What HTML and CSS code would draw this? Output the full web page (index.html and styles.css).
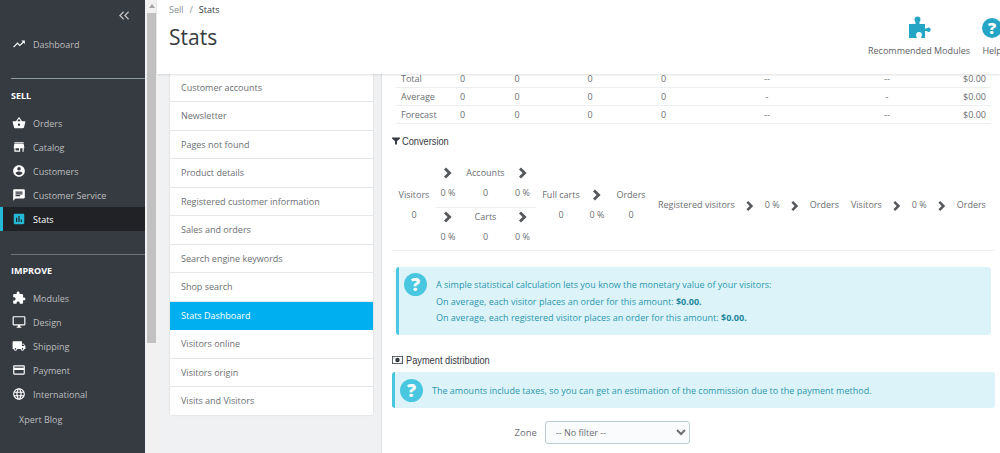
FILE: index.html
```html
<!DOCTYPE html>
<html lang="en">
<head>
  <meta charset="UTF-8" />
  <title>Stats</title>
  <link rel="stylesheet" href="styles.css">
</head>
<body>
  <svg class="sprite" xmlns="http://www.w3.org/2000/svg">
    <symbol id="i-trend" viewBox="0 0 24 24"><path d="M16 6l2.29 2.29-4.88 4.88-4-4L2 16.59 3.41 18l6-6 4 4 6.3-6.29L22 12V6z"/></symbol>
    <symbol id="i-basket" viewBox="0 0 24 24"><path d="M17.21 9l-4.38-6.56c-.19-.28-.51-.42-.83-.42-.32 0-.64.14-.83.43L6.79 9H2c-.55 0-1 .45-1 1 0 .09.01.18.04.27l2.54 9.27c.23.84 1 1.46 1.92 1.46h13c.92 0 1.69-.62 1.93-1.46l2.54-9.27L23 10c0-.55-.45-1-1-1h-4.79zM9 9l3-4.4L15 9H9zm3 8c-1.1 0-2-.9-2-2s.9-2 2-2 2 .9 2 2-.9 2-2 2z"/></symbol>
    <symbol id="i-store" viewBox="0 0 24 24"><path d="M20 4H4v2h16V4zm1 10v-2l-1-5H4l-1 5v2h1v6h10v-6h4v6h2v-6h1zm-9 4H6v-4h6v4z"/></symbol>
    <symbol id="i-account" viewBox="0 0 24 24"><path d="M12 2C6.48 2 2 6.48 2 12s4.48 10 10 10 10-4.48 10-10S17.52 2 12 2zm0 3c1.66 0 3 1.34 3 3s-1.34 3-3 3-3-1.34-3-3 1.34-3 3-3zm0 14.2c-2.5 0-4.71-1.28-6-3.22.03-1.99 4-3.08 6-3.08 1.99 0 5.97 1.09 6 3.08-1.29 1.94-3.5 3.22-6 3.22z"/></symbol>
    <symbol id="i-chat" viewBox="0 0 24 24"><path d="M20 2H4c-1.1 0-1.99.9-1.99 2L2 22l4-4h14c1.1 0 2-.9 2-2V4c0-1.1-.9-2-2-2zM6 9h12v2H6V9zm8 5H6v-2h8v2zm4-6H6V6h12v2z"/></symbol>
    <symbol id="i-stats" viewBox="0 0 24 24"><path d="M19 3H5c-1.1 0-2 .9-2 2v14c0 1.1.9 2 2 2h14c1.1 0 2-.9 2-2V5c0-1.1-.9-2-2-2zM9 17H7v-7h2v7zm4 0h-2V7h2v10zm4 0h-2v-4h2v4z"/></symbol>
    <symbol id="i-extension" viewBox="0 0 24 24"><path d="M20.5 11H19V7c0-1.1-.9-2-2-2h-4V3.5C13 2.12 11.88 1 10.5 1S8 2.12 8 3.5V5H4c-1.1 0-1.99.9-1.99 2v3.8H3.5c1.49 0 2.7 1.21 2.7 2.7s-1.21 2.7-2.7 2.7H2V20c0 1.1.9 2 2 2h3.8v-1.5c0-1.49 1.21-2.7 2.7-2.7 1.49 0 2.7 1.21 2.7 2.7V22H17c1.1 0 2-.9 2-2v-4h1.5c1.38 0 2.5-1.12 2.5-2.5S21.88 11 20.5 11z"/></symbol>
    <symbol id="i-desktop" viewBox="0 0 24 24"><path d="M21 2H3c-1.1 0-2 .9-2 2v12c0 1.1.9 2 2 2h7v2H8v2h8v-2h-2v-2h7c1.1 0 2-.9 2-2V4c0-1.1-.9-2-2-2zm0 14H3V4h18v12z"/></symbol>
    <symbol id="i-truck" viewBox="0 0 24 24"><path d="M20 8h-3V4H3c-1.1 0-2 .9-2 2v11h2c0 1.66 1.34 3 3 3s3-1.34 3-3h6c0 1.66 1.34 3 3 3s3-1.34 3-3h2v-5l-3-4zM6 18.5c-.83 0-1.5-.67-1.5-1.5s.67-1.5 1.5-1.5 1.5.67 1.5 1.5-.67 1.5-1.5 1.5zm13.5-9l1.96 2.5H17V9.5h2.5zm-1.5 9c-.83 0-1.5-.67-1.5-1.5s.67-1.5 1.5-1.5 1.5.67 1.5 1.5-.67 1.5-1.5 1.5z"/></symbol>
    <symbol id="i-card" viewBox="0 0 24 24"><path d="M20 4H4c-1.11 0-1.99.89-1.99 2L2 18c0 1.11.89 2 2 2h16c1.11 0 2-.89 2-2V6c0-1.11-.89-2-2-2zm0 14H4v-6h16v6zm0-10H4V6h16v2z"/></symbol>
    <symbol id="i-globe" viewBox="0 0 24 24"><path d="M11.99 2C6.47 2 2 6.48 2 12s4.47 10 9.99 10C17.52 22 22 17.52 22 12S17.52 2 11.99 2zm6.93 6h-2.95c-.32-1.25-.78-2.45-1.38-3.56 1.84.63 3.37 1.91 4.33 3.56zM12 4.04c.83 1.2 1.48 2.53 1.91 3.96h-3.82c.43-1.43 1.08-2.76 1.91-3.96zM4.26 14C4.1 13.36 4 12.69 4 12s.1-1.36.26-2h3.38c-.08.66-.14 1.32-.14 2 0 .68.06 1.34.14 2H4.26zm.82 2h2.95c.32 1.25.78 2.45 1.38 3.56-1.84-.63-3.37-1.9-4.33-3.56zm2.95-8H5.08c.96-1.66 2.49-2.93 4.33-3.56C8.81 5.55 8.35 6.75 8.03 8zM12 19.96c-.83-1.2-1.48-2.53-1.91-3.96h3.82c-.43 1.43-1.08 2.76-1.91 3.96zM14.34 14H9.66c-.09-.66-.16-1.32-.16-2 0-.68.07-1.35.16-2h4.68c.09.65.16 1.32.16 2 0 .68-.07 1.34-.16 2zm.25 5.56c.6-1.11 1.06-2.31 1.38-3.56h2.95c-.96 1.65-2.49 2.93-4.33 3.56zM16.36 14c.08-.66.14-1.32.14-2 0-.68-.06-1.34-.14-2h3.38c.16.64.26 1.31.26 2s-.1 1.36-.26 2h-3.38z"/></symbol>
    <symbol id="i-puzzle" viewBox="0 0 24 24"><path d="M2 8h6.5V6.600C8.500 5.200 7.500 5 7.500 3.500a3 3 0 0 1 6 0c0 1.500-1 1.700-1 3.100V8H18v4.500h1.300c1 0 1.200-1 2.200-1a2.200 2.200 0 0 1 0 4.400c-1 0-1.200-1-2.200-1H18V22h-3.800c0-1.400.7-1.700.7-3a2.900 2.900 0 0 0-5.800 0c0 1.300.7 1.600.7 3H2z"/></symbol>
    <symbol id="i-chevron" viewBox="0 0 10 14"><path d="M2.500 0L9.500 7l-7 7L0 11.500 4.500 7 0 2.500z"/></symbol>
    <symbol id="i-funnel" viewBox="0 0 14 14"><path d="M0 1h14v1.500L8.700 7.500V13H5.300V7.500L0 2.500z"/></symbol>
    <symbol id="i-money" viewBox="0 0 14 10"><path fill-rule="evenodd" d="M0 0h14v10H0zM1 1v8h12V1zM7 2.200a2.800 2.800 0 1 1 0 5.600 2.800 2.800 0 0 1 0-5.600zM2 2h1.500L2 3.500zM12 8h-1.500L12 6.500z"/></symbol>
    <symbol id="i-collapse" viewBox="0 0 12 10"><path d="M5 0l1.100 1.100L2.300 5l3.800 3.900L5 10 0 5zM11 0l1 1.100L8.300 5 12 8.900 11 10 6 5z"/></symbol>
  </svg>

  <nav class="sidebar">
    <div class="collapse-row"><svg class="collapse-icon"><use href="#i-collapse"/></svg></div>
    <a class="nav-item nav-dashboard"><svg class="nav-icon"><use href="#i-trend"/></svg>Dashboard</a>

    <div class="nav-section nav-section-sell">SELL</div>
    <div class="nav-group">
      <a class="nav-item"><svg class="nav-icon"><use href="#i-basket"/></svg>Orders</a>
      <a class="nav-item"><svg class="nav-icon"><use href="#i-store"/></svg>Catalog</a>
      <a class="nav-item"><svg class="nav-icon"><use href="#i-account"/></svg>Customers</a>
      <a class="nav-item"><svg class="nav-icon"><use href="#i-chat"/></svg>Customer Service</a>
      <a class="nav-item active"><svg class="nav-icon"><use href="#i-stats"/></svg>Stats</a>
    </div>

    <div class="nav-section nav-section-improve">IMPROVE</div>
    <div class="nav-group">
      <a class="nav-item"><svg class="nav-icon"><use href="#i-extension"/></svg>Modules</a>
      <a class="nav-item"><svg class="nav-icon"><use href="#i-desktop"/></svg>Design</a>
      <a class="nav-item"><svg class="nav-icon"><use href="#i-truck"/></svg>Shipping</a>
      <a class="nav-item"><svg class="nav-icon"><use href="#i-card"/></svg>Payment</a>
      <a class="nav-item"><svg class="nav-icon"><use href="#i-globe"/></svg>International</a>
      <a class="nav-item nav-plain">Xpert Blog</a>
    </div>
  </nav>

  <div class="scrollbar">
    <span class="scroll-arrow"></span>
    <div class="scroll-thumb"></div>
  </div>

  <div class="main">
    <header class="page-head">
      <div class="title-block">
        <div class="breadcrumb"><span class="crumb-muted">Sell</span><span class="crumb-sep">/</span><span>Stats</span></div>
        <h1>Stats</h1>
      </div>
      <div class="toolbar">
        <a class="tool"><svg class="tool-icon"><use href="#i-puzzle"/></svg>Recommended Modules</a>
        <a class="tool"><span class="help-circle tool-help">?</span>Help</a>
      </div>
    </header>

    <div class="content">
      <ul class="stat-list">
        <li>Customer accounts</li>
        <li>Newsletter</li>
        <li>Pages not found</li>
        <li>Product details</li>
        <li>Registered customer information</li>
        <li>Sales and orders</li>
        <li>Search engine keywords</li>
        <li>Shop search</li>
        <li class="current">Stats Dashboard</li>
        <li>Visitors online</li>
        <li>Visitors origin</li>
        <li>Visits and Visitors</li>
      </ul>

      <section class="panel">
        <table class="totals">
          <tr><td>Total</td><td>0</td><td>0</td><td>0</td><td>0</td><td>--</td><td>--</td><td>$0.00</td></tr>
          <tr><td>Average</td><td>0</td><td>0</td><td>0</td><td>0</td><td>-</td><td>-</td><td>$0.00</td></tr>
          <tr><td>Forecast</td><td>0</td><td>0</td><td>0</td><td>0</td><td>--</td><td>--</td><td>$0.00</td></tr>
        </table>

        <h4 class="panel-title title-conversion"><svg class="title-icon"><use href="#i-funnel"/></svg><span class="title-text">Conversion</span></h4>

        <div class="conversion">
          <div class="stack stack-visitors"><span>Visitors</span><span>0</span></div>
          <div class="funnel">
            <div class="funnel-row funnel-top">
              <div class="stack"><svg class="chev"><use href="#i-chevron"/></svg><span>0 %</span></div>
              <div class="stack"><span>Accounts</span><span>0</span></div>
              <div class="stack"><svg class="chev"><use href="#i-chevron"/></svg><span>0 %</span></div>
            </div>
            <div class="funnel-row">
              <div class="stack"><svg class="chev"><use href="#i-chevron"/></svg><span>0 %</span></div>
              <div class="stack"><span>Carts</span><span>0</span></div>
              <div class="stack"><svg class="chev"><use href="#i-chevron"/></svg><span>0 %</span></div>
            </div>
          </div>
          <div class="stack stack-carts"><span>Full carts</span><span>0</span></div>
          <div class="stack stack-rate"><svg class="chev"><use href="#i-chevron"/></svg><span>0 %</span></div>
          <div class="stack stack-orders"><span>Orders</span><span>0</span></div>
          <div class="flat">
            <span>Registered visitors</span>
            <svg class="chev"><use href="#i-chevron"/></svg>
            <span>0 %</span>
            <svg class="chev"><use href="#i-chevron"/></svg>
            <span>Orders</span>
          </div>
          <div class="flat">
            <span>Visitors</span>
            <svg class="chev"><use href="#i-chevron"/></svg>
            <span>0 %</span>
            <svg class="chev"><use href="#i-chevron"/></svg>
            <span>Orders</span>
          </div>
        </div>

        <div class="alert alert-calc">
          <span class="help-circle alert-icon">?</span>
          <div class="alert-text">
            <p>A simple statistical calculation lets you know the monetary value of your visitors:</p>
            <p>On average, each visitor places an order for this amount: <b>$0.00.</b></p>
            <p>On average, each registered visitor places an order for this amount: <b>$0.00.</b></p>
          </div>
        </div>

        <h4 class="panel-title title-payment"><svg class="title-icon title-icon-money"><use href="#i-money"/></svg><span class="title-text">Payment distribution</span></h4>

        <div class="alert alert-tax">
          <span class="help-circle alert-icon">?</span>
          <div class="alert-text">
            <p>The amounts include taxes, so you can get an estimation of the commission due to the payment method.</p>
          </div>
        </div>

        <form class="zone-form">
          <label for="zone">Zone</label>
          <select id="zone"><option>-- No filter --</option></select>
        </form>
      </section>
    </div>
  </div>
</body>
</html>
```

FILE: styles.css
```css
html, body {
  margin: 0;
  height: 453px;
  overflow: hidden;
}

body {
  display: flex;
  font-family: "Open Sans", sans-serif;
  font-size: 9px;
  color: #6c6f73;
  background: #eff1f2;
}

.sprite {
  display: none;
}

/* sidebar */
.sidebar {
  width: 145px;
  flex: none;
  background: #363a41;
  color: #bebebe;
}

.collapse-row {
  display: flex;
  justify-content: flex-end;
  height: 32px;
  padding: 11px 16px 0 0;
  box-sizing: border-box;
}

.collapse-icon {
  width: 10px;
  height: 9px;
  fill: #bebebe;
}

.nav-item {
  display: flex;
  align-items: center;
  height: 24px;
  padding-left: 12px;
  box-sizing: border-box;
}

.nav-icon {
  width: 14px;
  height: 14px;
  margin-right: 7px;
  fill: #fff;
  flex: none;
}

.nav-dashboard {
  margin-bottom: 22px;
}

.nav-section {
  margin-left: 11px;
  border-top: 1px solid #8d9ba0;
  color: #fff;
  font-weight: 700;
  line-height: 14px;
  box-sizing: border-box;
}

.nav-section-sell {
  height: 33px;
  padding-top: 10px;
}

.nav-section-improve {
  margin-top: 23px;
  height: 32px;
  padding-top: 9px;
  border-top-color: #6c7479;
}

.nav-item.active {
  background: #202226;
  color: #fff;
  border-left: 3px solid #25b9d7;
  padding-left: 9px;
}

.nav-item.active .nav-icon {
  fill: #25b9d7;
}

.nav-plain {
  padding-left: 19px;
  height: 26px;
}

/* fake window scrollbar */
.scrollbar {
  width: 12px;
  flex: none;
  background: #f1f1f1;
  padding: 13px 1px 0 2px;
  box-sizing: border-box;
  position: relative;
}

.scroll-arrow {
  position: absolute;
  top: 4px;
  left: 4px;
  border: 3px solid transparent;
  border-top: 0;
  border-bottom: 4px solid #a3a3a3;
}

.scroll-thumb {
  height: 330px;
  background: #c1c1c1;
}

/* page header */
.main {
  flex: 1;
  min-width: 0;
  display: flex;
  flex-direction: column;
}

.page-head {
  display: flex;
  height: 74px;
  flex: none;
  background: #fff;
  box-shadow: 0 1px 2px rgba(0, 0, 0, 0.12);
  position: relative;
  z-index: 1;
  overflow: hidden;
}

.title-block {
  width: 711px;
  flex: none;
  box-sizing: border-box;
  padding: 3px 0 0 12px;
}

.breadcrumb {
  line-height: 14px;
  color: #363a41;
}

.crumb-muted {
  color: #8a8f93;
}

.crumb-sep {
  margin: 0 6px;
  color: #8a8f93;
}

h1 {
  margin: 4px 0 0;
  font-size: 21px;
  font-weight: 400;
  line-height: 32px;
  color: #363a41;
}

.toolbar {
  display: flex;
  flex: none;
  gap: 12px;
}

.tool {
  display: flex;
  flex-direction: column;
  align-items: center;
  padding-top: 16px;
  line-height: 14px;
  color: #5d6165;
  white-space: nowrap;
}

.tool-icon {
  width: 24px;
  height: 24px;
  margin-bottom: 4px;
  fill: #25a5c5;
}

.help-circle {
  display: flex;
  align-items: center;
  justify-content: center;
  border-radius: 50%;
  color: #fff;
  font-weight: 800;
  flex: none;
}

.tool-help {
  width: 20px;
  height: 20px;
  margin: 2px 0 6px;
  background: #25a5c5;
  font-size: 16px;
  line-height: 20px;
}

/* content */
.content {
  flex: 1;
  display: flex;
  min-height: 0;
}

.stat-list {
  width: 203px;
  height: 341.5px;
  flex: none;
  margin: -0.5px 8.5px 0 12.5px;
  padding: 0;
  list-style: none;
  background: #fff;
  box-shadow: 0 0 2px rgba(0, 0, 0, 0.12);
}

.stat-list li {
  height: 28.5px;
  box-sizing: border-box;
  padding-left: 11.5px;
  border-bottom: 1px solid #e4e6e8;
  line-height: 27px;
}

.stat-list li:last-child {
  border-bottom: 0;
}

.stat-list .current {
  background: #00aff0;
  color: #fff;
  border-bottom: 0;
}

.panel {
  flex: 1;
  min-width: 0;
  background: #fff;
  border-left: 1px solid #dfe3e5;
  padding: 0 5px 0 10px;
}

.totals {
  width: 595px;
  margin-left: 4px;
  border-collapse: collapse;
  table-layout: fixed;
}

.totals td {
  height: 17px;
  padding: 0;
  border-bottom: 1px solid #eceeef;
  text-align: center;
}

.totals tr:first-child td {
  height: 10px;
  padding-bottom: 3px;
  line-height: 10px;
}

.totals td:nth-child(1) {
  width: 59px;
  padding-left: 5px;
  text-align: left;
}

.totals td:nth-child(2) {
  width: 54.5px;
  text-align: left;
}

.totals td:nth-child(3) {
  width: 73px;
  text-align: left;
}

.totals td:nth-child(4) {
  width: 73.5px;
  text-align: left;
}

.totals td:nth-child(5) {
  width: 46px;
  text-align: left;
}

.totals td:nth-child(6),
.totals td:nth-child(7) {
  width: 120px;
}

.totals td:nth-child(8) {
  padding-right: 5px;
  text-align: right;
}

.panel-title {
  display: flex;
  align-items: center;
  margin: 0;
  font-family: "Liberation Sans", sans-serif;
  font-size: 11px;
  font-weight: 400;
  line-height: 14px;
  color: #363a41;
}

/* the original heading face is a condensed one, none is installed */
.title-text {
  transform: scaleX(0.84);
  transform-origin: left center;
}

.title-conversion {
  margin-top: 10px;
}

.title-payment {
  margin-top: 18px;
}

.title-icon {
  width: 8px;
  height: 8px;
  margin-right: 2px;
  fill: #363a41;
}

.title-icon-money {
  width: 11px;
  margin-right: 3px;
}

/* conversion funnel */
.conversion {
  display: flex;
  align-items: center;
  box-sizing: content-box;
  height: 91px;
  padding-top: 3px;
  margin-top: 8px;
  border-bottom: 1px solid #eceeef;
  white-space: nowrap;
}

.stack {
  display: flex;
  flex-direction: column;
  align-items: center;
  gap: 6px;
  line-height: 14px;
}

.stack .chev {
  height: 14px;
}

.chev {
  width: 8px;
  height: 10px;
  fill: #55585c;
  flex: none;
}

.stack-visitors {
  width: 44px;
}

.funnel {
  width: 100px;
}

.funnel-row {
  display: grid;
  grid-template-columns: 24px 51px 23px;
}

.funnel-top {
  border-bottom: 1px solid #eceeef;
  padding-bottom: 7px;
  margin-bottom: 2px;
}

.stack-carts {
  width: 50px;
}

.stack-rate {
  width: 22px;
}

.stack-orders {
  width: 46px;
}

.flat {
  display: flex;
  align-items: center;
  gap: 11px;
  margin-left: 4px;
  margin-right: 8px;
}

.flat .chev {
  margin-top: 3px;
}

/* alerts */
.alert {
  display: flex;
  align-items: flex-start;
  color: #2b97ad;
  background: #dcf4f9;
  border-left: 3px solid #4ac7e0;
  border-radius: 3px;
  box-sizing: border-box;
}

.alert p {
  margin: 0;
  line-height: 16.5px;
}

.alert b {
  color: #22879c;
}

.alert-calc {
  width: 595px;
  height: 68px;
  margin: 16px 0 0 4px;
  padding: 6px 0 0 5px;
}

.alert-tax {
  width: 603px;
  height: 36px;
  margin-top: 5px;
  padding: 7px 0 0 5px;
}

.alert-icon {
  width: 23px;
  height: 23px;
  margin-right: 9px;
  background: #4ac7e0;
  font-size: 18px;
  line-height: 23px;
}

.alert-text {
  padding-top: 4px;
}

.zone-form {
  display: flex;
  align-items: center;
  gap: 8px;
  margin: 13px 0 0 122.5px;
  font-size: 9.5px;
}

select {
  width: 145px;
  height: 23px;
  padding-left: 6px;
  font-family: inherit;
  font-size: 9px;
  color: #6c6f73;
  background: #fafbfc;
  border: 1px solid #bbcdd2;
  border-radius: 3px;
}
```
